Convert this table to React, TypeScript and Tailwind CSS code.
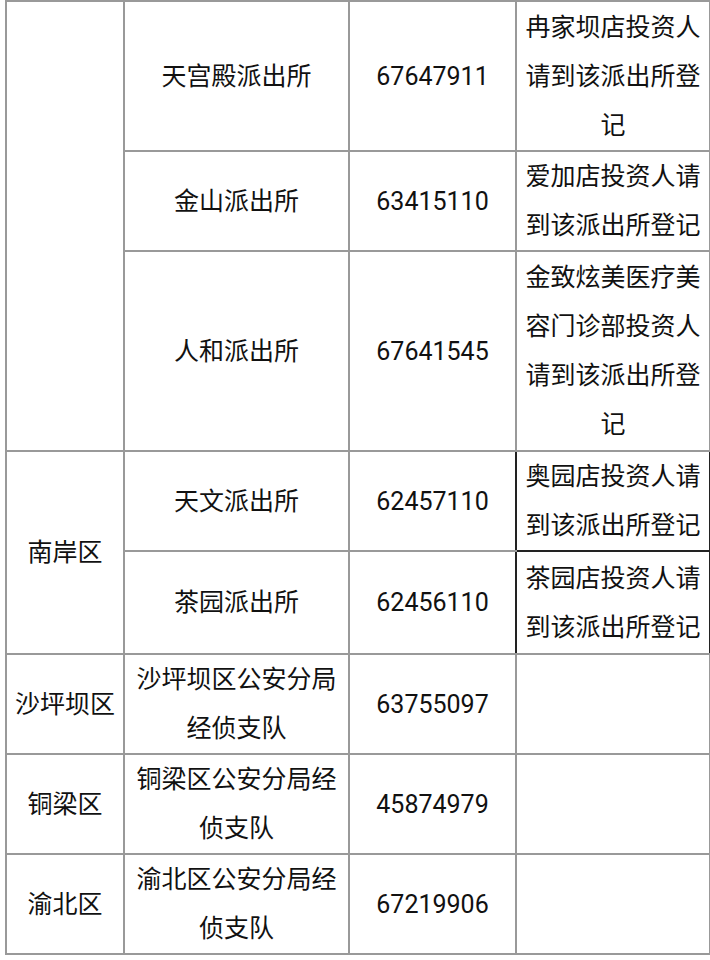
import React from "react";

type Row = {
  district?: { text: string; span: number };
  station: string;
  phone: string;
  note: string;
  height: number;
  dark?: boolean;
};

const rows: Row[] = [
  { district: { text: "", span: 3 }, station: "天宫殿派出所", phone: "67647911", note: "冉家坝店投资人请到该派出所登记", height: 150 },
  { station: "金山派出所", phone: "63415110", note: "爱加店投资人请到该派出所登记", height: 100 },
  { station: "人和派出所", phone: "67641545", note: "金致炫美医疗美容门诊部投资人请到该派出所登记", height: 200 },
  { district: { text: "南岸区", span: 2 }, station: "天文派出所", phone: "62457110", note: "奥园店投资人请到该派出所登记", height: 100, dark: true },
  { station: "茶园派出所", phone: "62456110", note: "茶园店投资人请到该派出所登记", height: 103, dark: true },
  { district: { text: "沙坪坝区", span: 1 }, station: "沙坪坝区公安分局经侦支队", phone: "63755097", note: "", height: 98 },
  { district: { text: "铜梁区", span: 1 }, station: "铜梁区公安分局经侦支队", phone: "45874979", note: "", height: 98 },
  { district: { text: "渝北区", span: 1 }, station: "渝北区公安分局经侦支队", phone: "67219906", note: "", height: 100 },
];

const cell = "border-2 border-[#999] px-[8px] py-0 text-center align-middle";

export default function App() {
  return (
    <div
      className="bg-white w-[710px] h-[960px] text-[#111] text-[25px] leading-[49px]"
      style={{ fontFamily: 'Roboto, "Noto Sans CJK SC", sans-serif' }}
    >
      <table className="ml-[5px] w-[704px] table-fixed border-collapse">
        <colgroup>
          <col className="w-[118px]" />
          <col className="w-[225px]" />
          <col className="w-[167px]" />
          <col className="w-[194px]" />
        </colgroup>
        <tbody>
          {rows.map((r, i) => (
            <tr key={i} style={{ height: r.height }}>
              {r.district && (
                <td rowSpan={r.district.span} className={cell}>
                  {r.district.text}
                </td>
              )}
              <td className={cell}>{r.station}</td>
              <td className={r.dark ? cell + " border-r-[#222]" : cell}>{r.phone}</td>
              <td
                className={
                  r.dark
                    ? cell + " border-l-[#222] border-r-[#222] " + (i === 3 ? "border-b-[#222]" : "border-b-[#999]")
                    : cell
                }
              >
                {r.note}
              </td>
            </tr>
          ))}
        </tbody>
      </table>
    </div>
  );
}
